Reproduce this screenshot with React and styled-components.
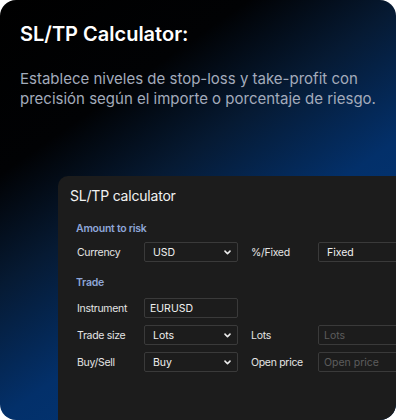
import React from "react";
import styled, { createGlobalStyle } from "styled-components";

const Global = createGlobalStyle`
  html, body { margin: 0; padding: 0; background: #ffffff; }
  * { box-sizing: border-box; }
`;

const Card = styled.div`
  width: 396px;
  height: 420px;
  border-radius: 16px;
  overflow: hidden;
  display: flex;
  flex-direction: column;
  background: linear-gradient(145deg, #000000 0%, #010204 25%, #061a33 41%, #03306a 60%, #003b80 100%);
`;

const Header = styled.div`
  padding: 20px 20px 0 20px;
  height: 176px;
  flex: none;
`;

const Title = styled.h1`
  margin: 0;
  font-family: Inter, "Liberation Sans", sans-serif;
  font-weight: 600;
  font-size: 20px;
  line-height: 28px;
  color: #ffffff;
`;

const Desc = styled.p`
  margin: 21px 0 0 0;
  font-family: Inter, "Liberation Sans", sans-serif;
  font-size: 15px;
  line-height: 20px;
  color: #a3abbb;
  white-space: nowrap;
`;

const Panel = styled.div`
  margin-left: 58px;
  width: 380px;
  flex: 1;
  background: #1c1c1c;
  border-top-left-radius: 10px;
  padding: 10px 0 0 12px;
  font-family: Inter, "Liberation Sans", sans-serif;
`;

const PanelTitle = styled.div`
  font-size: 14px;
  letter-spacing: -0.2px;
  line-height: 20px;
  color: #f2f2f2;
`;

const Section = styled.div`
  margin-top: ${(p) => p.$top}px;
  padding-left: 6px;
`;

const SectionLabel = styled.div`
  font-size: 10.5px;
  letter-spacing: -0.25px;
  font-weight: 600;
  line-height: 14px;
  color: #8ea6d8;
`;

const Rows = styled.div`
  margin-top: ${(p) => p.$top}px;
  display: flex;
  flex-direction: column;
  gap: 7px;
`;

const Row = styled.div`
  display: grid;
  grid-template-columns: 68px 94px 12px 68px 94px;
  align-items: center;
  height: 20px;
`;

const Label = styled.div`
  grid-column: ${(p) => p.$col};
  font-size: 10.5px;
  letter-spacing: -0.3px;
  color: #e4e4e4;
  padding-left: 1px;
  white-space: nowrap;
`;

const Field = styled.div`
  grid-column: ${(p) => p.$col};
  height: 20px;
  border: 1px solid #3a3a3a;
  border-radius: 2px;
  display: flex;
  align-items: center;
  justify-content: space-between;
  padding: 0 ${(p) => (p.$select ? 6 : 5)}px 0 ${(p) => (p.$select ? 8 : 5)}px;
  font-size: 10.5px;
  color: ${(p) => (p.$placeholder ? "#5c5c5c" : "#f0f0f0")};
  white-space: nowrap;
`;

const Chevron = () => (
  <svg width="7" height="5" viewBox="0 0 7 5">
    <path d="M1 1.1 L3.5 3.7 L6 1.1" fill="none" stroke="#ececec" strokeWidth="1.6" strokeLinecap="round" strokeLinejoin="round" />
  </svg>
);

const Select = ({ col, children }) => (
  <Field $col={col} $select>
    <span>{children}</span>
    <Chevron />
  </Field>
);

export default function App() {
  return (
    <>
      <Global />
      <Card>
        <Header>
          <Title>SL/TP Calculator:</Title>
          <Desc>
            Establece niveles de stop-loss y take-profit con
            <br />
            precisión según el importe o porcentaje de riesgo.
          </Desc>
        </Header>
        <Panel>
          <PanelTitle>SL/TP calculator</PanelTitle>
          <Section $top={16}>
            <SectionLabel>Amount to risk</SectionLabel>
            <Rows $top={6}>
              <Row>
                <Label $col={1}>Currency</Label>
                <Select col={2}>USD</Select>
                <Label $col={4}>%/Fixed</Label>
                <Field $col={5} $select>Fixed</Field>
              </Row>
            </Rows>
          </Section>
          <Section $top={14}>
            <SectionLabel>Trade</SectionLabel>
            <Rows $top={8}>
              <Row>
                <Label $col={1}>Instrument</Label>
                <Field $col={2}>EURUSD</Field>
              </Row>
              <Row>
                <Label $col={1}>Trade size</Label>
                <Select col={2}>Lots</Select>
                <Label $col={4}>Lots</Label>
                <Field $col={5} $placeholder>Lots</Field>
              </Row>
              <Row>
                <Label $col={1}>Buy/Sell</Label>
                <Select col={2}>Buy</Select>
                <Label $col={4}>Open price</Label>
                <Field $col={5} $placeholder>Open price</Field>
              </Row>
            </Rows>
          </Section>
        </Panel>
      </Card>
    </>
  );
}
